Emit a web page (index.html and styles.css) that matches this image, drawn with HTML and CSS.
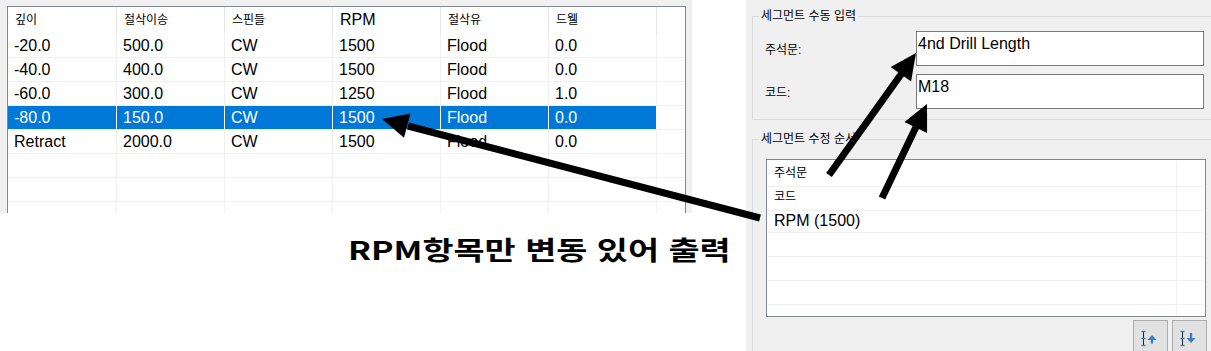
FILE: index.html
```html
<!DOCTYPE html>
<html lang="ko">
<head>
    <meta charset="UTF-8">
    <meta name="viewport" content="width=device-width, initial-scale=1.0">
    <title>세그먼트 수정</title>
    <link rel="stylesheet" href="styles.css">
</head>
<body>

<div class="screen">
    <!-- Segment table -->
    <div class="left">
        <div class="pane">
            <div class="grid">
                <div class="row head">
                    <div class="cell ko">깊이</div>
                    <div class="cell ko">절삭이송</div>
                    <div class="cell ko">스핀들</div>
                    <div class="cell">RPM</div>
                    <div class="cell ko">절삭유</div>
                    <div class="cell ko">드웰</div>
                    <div class="cell"></div>
                </div>
                <div class="row">
                    <div class="cell">-20.0</div><div class="cell">500.0</div><div class="cell">CW</div>
                    <div class="cell">1500</div><div class="cell">Flood</div><div class="cell">0.0</div><div class="cell"></div>
                </div>
                <div class="row">
                    <div class="cell">-40.0</div><div class="cell">400.0</div><div class="cell">CW</div>
                    <div class="cell">1500</div><div class="cell">Flood</div><div class="cell">0.0</div><div class="cell"></div>
                </div>
                <div class="row">
                    <div class="cell">-60.0</div><div class="cell">300.0</div><div class="cell">CW</div>
                    <div class="cell">1250</div><div class="cell">Flood</div><div class="cell">1.0</div><div class="cell"></div>
                </div>
                <div class="row selected">
                    <div class="cell">-80.0</div><div class="cell">150.0</div><div class="cell">CW</div>
                    <div class="cell">1500</div><div class="cell">Flood</div><div class="cell">0.0</div><div class="cell"></div>
                </div>
                <div class="row">
                    <div class="cell">Retract</div><div class="cell">2000.0</div><div class="cell">CW</div>
                    <div class="cell">1500</div><div class="cell">Flood</div><div class="cell">0.0</div><div class="cell"></div>
                </div>
                <div class="row">
                    <div class="cell"></div><div class="cell"></div><div class="cell"></div>
                    <div class="cell"></div><div class="cell"></div><div class="cell"></div><div class="cell"></div>
                </div>
                <div class="row">
                    <div class="cell"></div><div class="cell"></div><div class="cell"></div>
                    <div class="cell"></div><div class="cell"></div><div class="cell"></div><div class="cell"></div>
                </div>
                <div class="row">
                    <div class="cell"></div><div class="cell"></div><div class="cell"></div>
                    <div class="cell"></div><div class="cell"></div><div class="cell"></div><div class="cell"></div>
                </div>
            </div>
        </div>
        <p class="caption">RPM항목만 변동 있어 출력</p>
    </div>

    <!-- Segment edit panel -->
    <div class="right">
        <div class="group group-input">
            <div class="group-title">세그먼트 수동 입력</div>
            <div class="field first">
                <label>주석문:</label>
                <div class="textbox">4nd Drill Length</div>
            </div>
            <div class="field">
                <label>코드:</label>
                <div class="textbox">M18</div>
            </div>
        </div>

        <div class="group group-order">
            <div class="group-title">세그먼트 수정 순서</div>
            <div class="list">
                <div class="item"><span class="ko">주석문</span><span></span></div>
                <div class="item"><span class="ko">코드</span><span></span></div>
                <div class="item"><span>RPM (1500)</span><span></span></div>
                <div class="item"><span></span><span></span></div>
                <div class="item"><span></span><span></span></div>
                <div class="item"><span></span><span></span></div>
                <div class="item"><span></span><span></span></div>
            </div>
            <div class="btns">
                <button class="tool" title="Move up">
                    <svg width="33" height="32" viewBox="0 0 33 32">
                        <path d="M9.5 10v15" stroke="#222" stroke-width="1"/>
                        <path d="M7.5 10.5h4M7.5 17.5h4M7.5 24.5h4" stroke="#3c7fc1" stroke-width="1.5"/>
                        <path d="M18 14l-4.5 5h9z" fill="#3c7fc1"/>
                        <rect x="16.8" y="18.5" width="2.4" height="4" fill="#3c7fc1"/>
                    </svg>
                </button>
                <button class="tool" title="Move down">
                    <svg width="33" height="32" viewBox="0 0 33 32">
                        <path d="M9.5 10v15" stroke="#222" stroke-width="1"/>
                        <path d="M7.5 10.5h4M7.5 17.5h4M7.5 24.5h4" stroke="#3c7fc1" stroke-width="1.5"/>
                        <rect x="16.8" y="12" width="2.4" height="5" fill="#3c7fc1"/>
                        <path d="M13.5 17h9l-4.5 5z" fill="#3c7fc1"/>
                    </svg>
                </button>
            </div>
        </div>
    </div>

    <!-- Annotation arrows -->
    <svg class="arrows" width="1211" height="351" viewBox="0 0 1211 351">
        <line x1="760" y1="218" x2="408" y2="126" stroke="#000" stroke-width="7"/>
        <polygon points="382,119 404,137.7 410.4,113.5" fill="#000"/>
        <line x1="829" y1="175" x2="902" y2="73" stroke="#000" stroke-width="7"/>
        <polygon points="916,53 911.1,81.5 890.7,66.9" fill="#000"/>
        <line x1="882" y1="198" x2="916" y2="127" stroke="#000" stroke-width="7"/>
        <polygon points="927,104 927.1,132.9 904.5,122.1" fill="#000"/>
    </svg>
</div>

</body>
</html>
```

FILE: styles.css
```css
body {
    margin: 0;
    font-family: "Liberation Sans", "Noto Sans CJK KR", sans-serif;
    font-size: 16px;
    color: #000;
    background: #fff;
}
.screen {
    position: relative;
    display: flex;
    width: 1211px;
    height: 351px;
    overflow: hidden;
}
.ko {
    font-size: 12px;
}

/* left: segment table */
.left {
    width: 692px;
}
.pane {
    height: 213px;
    padding: 6px 6px 0 7px;
    box-sizing: border-box;
    background: #f0f0f0;
    overflow: hidden;
}
.grid {
    height: 240px;
    background: #fff;
    border: 1px solid #828790;
    border-bottom: none;
}
.row {
    display: grid;
    grid-template-columns: 109px 108px 108px 108px 108px 108px 1fr;
    height: 24px;
}
.cell {
    box-sizing: border-box;
    padding-left: 6px;
    line-height: 23px;
    white-space: nowrap;
    border-right: 1px solid #f0f0f0;
    border-bottom: 1px solid #f0f0f0;
}
.cell:last-child {
    border-right: none;
}
.head {
    height: 27px;
}
.head .cell {
    line-height: 26px;
    padding-left: 7px;
    border-right-color: #e5e5e5;
    border-bottom-color: #fff;
}
.head .cell.ko {
    line-height: 27px;
}
.selected .cell:not(:last-child) {
    background: #0078d7;
    color: #fff;
    border-right-color: #fff;
}
.caption {
    margin: 18px 0 0 348px;
    font-family: "Noto Sans CJK KR", sans-serif;
    font-size: 26px;
    font-weight: bold;
    line-height: 36px;
    white-space: nowrap;
    transform: scaleX(1.3);
    transform-origin: left center;
}

/* right: edit panel */
.right {
    width: 465px;
    margin-left: 54px;
    padding: 16px 0 0 6px;
    box-sizing: border-box;
    background: #f0f0f0;
    overflow: hidden;
}
.group {
    width: 480px;
    border: 1px solid #dcdcdc;
    box-sizing: border-box;
}
.group-input {
    height: 104px;
}
.group-order {
    height: 260px;
    margin-top: 19px;
}
.group-title {
    width: max-content;
    margin: -9px 0 0 6px;
    padding: 0 2px;
    font-size: 12px;
    line-height: 17px;
    background: #f0f0f0;
}
.field {
    display: flex;
    align-items: center;
    margin-top: 8px;
    padding-left: 12px;
}
.field.first {
    margin-top: 6px;
}
.field label {
    width: 151px;
    font-size: 12px;
}
.textbox {
    width: 288px;
    height: 35px;
    box-sizing: border-box;
    padding: 3px 2px 0 1px;
    line-height: 18px;
    background: #fff;
    border: 1px solid #7a7a7a;
}
.list {
    width: 440px;
    height: 158px;
    margin: 11px 0 0 13px;
    padding: 1px 0 0 1px;
    box-sizing: border-box;
    background: #fff;
    border: 1px solid #828790;
    overflow: hidden;
}
.item {
    display: grid;
    grid-template-columns: 409px 26px;
    height: 24px;
}
.item span {
    box-sizing: border-box;
    padding-left: 6px;
    line-height: 23px;
    border-bottom: 1px solid #f0f0f0;
}
.item span.ko {
    line-height: 25px;
}
.item span:first-child {
    border-right: 1px solid #f0f0f0;
}
.btns {
    display: flex;
    gap: 4px;
    margin: 3px 0 0 380px;
}
.tool {
    width: 35px;
    height: 34px;
    padding: 0;
    background: #e1e1e1;
    border: 1px solid #adadad;
    border-radius: 0;
}
.tool svg {
    display: block;
}

/* annotation overlay */
.arrows {
    position: absolute;
    left: 0;
    top: 0;
    pointer-events: none;
}
```
